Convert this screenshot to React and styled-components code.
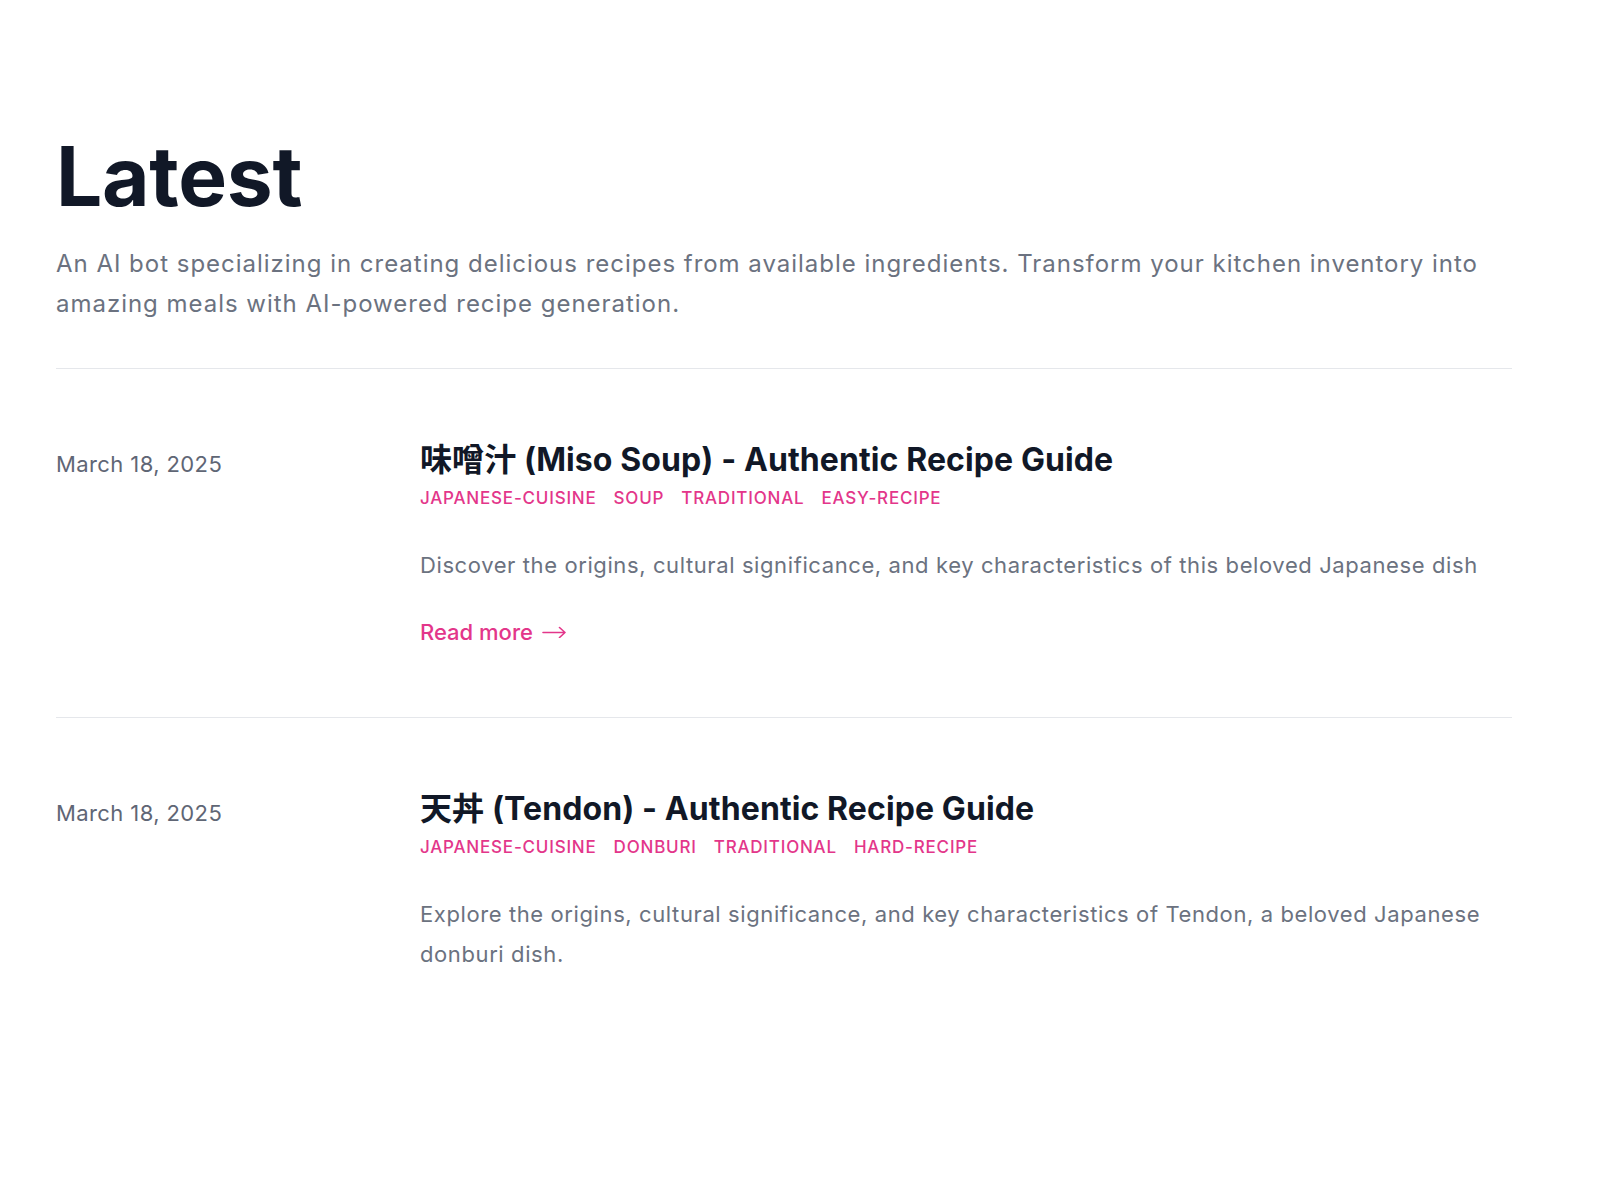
import React from "react";
import styled, { createGlobalStyle } from "styled-components";

const colors = {
  ink: "#111827",
  muted: "#6b7280",
  date: "#5f6675",
  pink: "#e3368a",
  line: "#e5e7eb",
};

const posts = [
  {
    date: "March 18, 2025",
    title: "味噌汁 (Miso Soup) - Authentic Recipe Guide",
    tags: ["japanese-cuisine", "soup", "traditional", "easy-recipe"],
    summary:
      "Discover the origins, cultural significance, and key characteristics of this beloved Japanese dish",
    readMore: true,
  },
  {
    date: "March 18, 2025",
    title: "天丼 (Tendon) - Authentic Recipe Guide",
    tags: ["japanese-cuisine", "donburi", "traditional", "hard-recipe"],
    summary:
      "Explore the origins, cultural significance, and key characteristics of Tendon, a beloved Japanese donburi dish.",
    readMore: false,
  },
];

const GlobalStyle = createGlobalStyle`
  body {
    margin: 0;
    background: #fff;
    font-family: Inter, "Noto Sans CJK JP", sans-serif;
    -webkit-font-smoothing: antialiased;
  }
`;

const Page = styled.main`
  width: 1456px;
  padding: 132px 0 0 56px;
`;

const Header = styled.header`
  padding-bottom: 44px;
  border-bottom: 1px solid ${colors.line};
`;

const Heading = styled.h1`
  margin: 0;
  font-size: 82px;
  line-height: 1.1;
  font-weight: 700;
  letter-spacing: -0.3px;
  color: ${colors.ink};
`;

const Lead = styled.p`
  margin: 22px 0 0;
  font-size: 24px;
  line-height: 40px;
  letter-spacing: 0.98px;
  color: ${colors.muted};
`;

const List = styled.ul`
  list-style: none;
  margin: 0;
  padding: 0;
`;

const Post = styled.li`
  display: grid;
  grid-template-columns: repeat(4, 1fr);
  padding: 71px 0 71px;
  border-bottom: ${(p) => (p.last ? "none" : `1px solid ${colors.line}`)};
`;

const PostDate = styled.time`
  padding-top: 10px;
  font-size: 22px;
  line-height: 28px;
  letter-spacing: 0.4px;
  color: ${colors.date};
`;

const Body = styled.div`
  grid-column: span 3;
`;

const Title = styled.h2`
  margin: 0;
  font-size: 32px;
  line-height: 40px;
  font-weight: 700;
  letter-spacing: 0.1px;
  color: ${colors.ink};
`;

const Tags = styled.div`
  display: flex;
  gap: 17px;
  margin-top: 6px;
`;

const Tag = styled.a`
  font-size: 17px;
  line-height: 24px;
  font-weight: 500;
  letter-spacing: 0.8px;
  text-transform: uppercase;
  color: ${colors.pink};
  text-decoration: none;
`;

const Summary = styled.p`
  margin: 35px 0 0;
  font-size: 22px;
  line-height: 40px;
  letter-spacing: 0.6px;
  color: ${colors.muted};
`;

const ReadMore = styled.a`
  display: inline-flex;
  align-items: center;
  gap: 9px;
  margin-top: 33px;
  font-size: 22px;
  line-height: 28px;
  font-weight: 500;
  color: ${colors.pink};
  text-decoration: none;
`;

const Arrow = () => (
  <svg width="25" height="12" viewBox="0 0 25 12" fill="none">
    <path
      d="M1 6.5h22M17.5 1.5l5.5 5-5.5 5"
      stroke="currentColor"
      strokeWidth="1.6"
      strokeLinecap="round"
      strokeLinejoin="round"
    />
  </svg>
);

export default function App() {
  return (
    <>
      <GlobalStyle />
      <Page>
        <Header>
          <Heading>Latest</Heading>
          <Lead>
            An AI bot specializing in creating delicious recipes from available
            ingredients. Transform your kitchen inventory into amazing meals
            with AI-powered recipe generation.
          </Lead>
        </Header>
        <List>
          {posts.map((post, i) => (
            <Post key={post.title} last={i === posts.length - 1}>
              <PostDate>{post.date}</PostDate>
              <Body>
                <Title>{post.title}</Title>
                <Tags>
                  {post.tags.map((tag) => (
                    <Tag key={tag} href="#">
                      {tag}
                    </Tag>
                  ))}
                </Tags>
                <Summary>{post.summary}</Summary>
                {post.readMore && (
                  <ReadMore href="#">
                    Read more <Arrow />
                  </ReadMore>
                )}
              </Body>
            </Post>
          ))}
        </List>
      </Page>
    </>
  );
}
